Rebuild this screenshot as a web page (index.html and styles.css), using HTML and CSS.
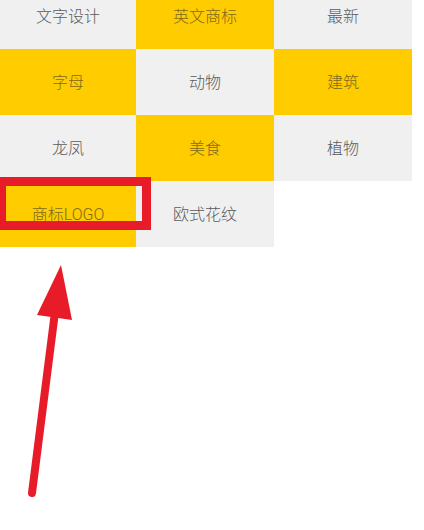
FILE: index.html
```html
<!DOCTYPE html>
<html lang="zh">
<head>
<meta charset="utf-8">
<link rel="stylesheet" href="styles.css">
</head>
<body>
<div class="page">
  <div class="grid">
    <div class="cell gray">文字设计</div>
    <div class="cell yellow">英文商标</div>
    <div class="cell gray">最新</div>
    <div class="cell yellow">字母</div>
    <div class="cell gray">动物</div>
    <div class="cell yellow">建筑</div>
    <div class="cell gray">龙凤</div>
    <div class="cell yellow">美食</div>
    <div class="cell gray">植物</div>
    <div class="cell yellow">商标LOGO</div>
    <div class="cell gray">欧式花纹</div>
  </div>
  <div class="highlight"></div>
  <svg class="arrow" width="424" height="530" viewBox="0 0 424 530">
    <line x1="32" y1="493" x2="55" y2="312" stroke="#e81c28" stroke-width="8" stroke-linecap="round"/>
    <polygon points="61,265 37,315 72,320" fill="#e81c28"/>
  </svg>
</div>
</body>
</html>
```

FILE: styles.css
```css
html, body {
  margin: 0;
  padding: 0;
  background: #ffffff;
}
.page {
  position: relative;
  width: 424px;
  height: 530px;
  overflow: hidden;
  font-family: Roboto, "Noto Sans CJK SC", "Noto Sans", sans-serif;
}
.grid {
  display: grid;
  grid-template-columns: 136px 138px 138px;
  grid-auto-rows: 66px;
  margin-top: -17px;
}
.cell {
  display: flex;
  align-items: center;
  justify-content: center;
  padding-bottom: 3px;
  font-size: 16px;
  font-weight: 300;
}
.gray {
  background: #f0f0f0;
  color: #5a5a5a;
}
.yellow {
  background: #ffcc00;
  color: #7d6a1c;
}
.highlight {
  position: absolute;
  left: -3px;
  top: 177px;
  width: 136px;
  height: 35px;
  border: 9px solid #e81c28;
}
.arrow {
  position: absolute;
  left: 0;
  top: 0;
}
```
